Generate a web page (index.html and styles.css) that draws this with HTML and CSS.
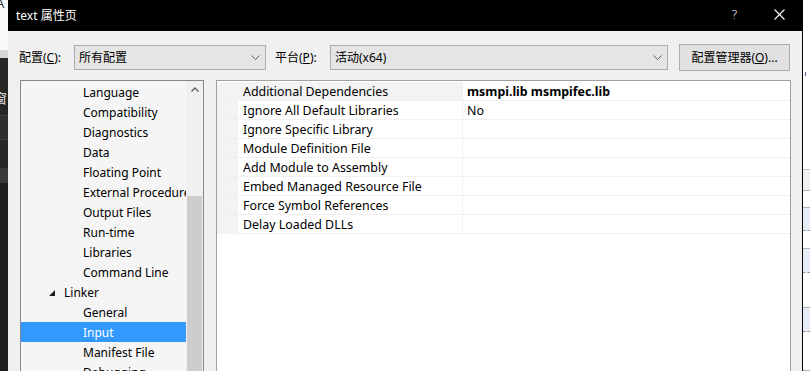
FILE: index.html
```html
<!DOCTYPE html>
<html lang="zh-CN">
<head>
<meta charset="utf-8">
<title>text 属性页</title>
<link rel="stylesheet" href="styles.css">
</head>
<body>
<div class="desk desk-left">
  <div class="dl-white"><span class="dl-a">A</span></div>
  <div class="dl-lgray"></div>
  <div class="dl-dark1"><span class="dl-char">窗</span></div>
  <div class="dl-box"></div>
  <div class="dl-dark2"></div>
  <div class="dl-band"></div>
  <div class="dl-dark3"></div>
</div>

<div class="dialog">
  <div class="titlebar">
    <div class="title">text 属性页</div>
    <div class="tb-btn tb-help">?</div>
    <div class="tb-btn tb-close">
      <svg width="11" height="11" viewBox="0 0 11 11"><path d="M0.5 0.5 L10.5 10.5 M10.5 0.5 L0.5 10.5" stroke="#fff" stroke-width="1.1" fill="none"/></svg>
    </div>
  </div>

  <div class="body">
    <div class="toprow">
      <label class="lbl lbl-cfg">配置(<u>C</u>):</label>
      <div class="combo combo-cfg">
        <span>所有配置</span>
        <svg class="chev" width="9" height="5" viewBox="0 0 9 5"><path d="M0.5 0.5 L4.5 4.5 L8.5 0.5" stroke="#606060" fill="none"/></svg>
      </div>
      <label class="lbl lbl-plat">平台(<u>P</u>):</label>
      <div class="combo combo-plat">
        <span>活动(x64)</span>
        <svg class="chev" width="9" height="5" viewBox="0 0 9 5"><path d="M0.5 0.5 L4.5 4.5 L8.5 0.5" stroke="#606060" fill="none"/></svg>
      </div>
      <button class="btn">配置管理器(<u>O</u>)...</button>
    </div>

    <div class="panels">
      <div class="tree">
        <div class="tree-list">
          <div class="ti child">Language</div>
          <div class="ti child">Compatibility</div>
          <div class="ti child">Diagnostics</div>
          <div class="ti child">Data</div>
          <div class="ti child">Floating Point</div>
          <div class="ti child">External Procedures</div>
          <div class="ti child">Output Files</div>
          <div class="ti child">Run-time</div>
          <div class="ti child">Libraries</div>
          <div class="ti child">Command Line</div>
          <div class="ti parent"><svg class="tri" width="6" height="6" viewBox="0 0 6 6"><path d="M6 0 L6 6 L0 6 Z" fill="#1e1e1e"/></svg>Linker</div>
          <div class="ti child">General</div>
          <div class="ti child sel">Input</div>
          <div class="ti child">Manifest File</div>
          <div class="ti child">Debugging</div>
        </div>
        <div class="vscroll">
          <div class="sc-up"><svg width="8" height="5" viewBox="0 0 8 5"><path d="M0.5 4.5 L4 1 L7.5 4.5" stroke="#606060" stroke-width="1.4" fill="none"/></svg></div>
          <div class="sc-track"></div>
          <div class="sc-thumb"></div>
        </div>
      </div>

      <div class="grid">
        <div class="prow focus"><div class="pm"></div><div class="pn">Additional Dependencies</div><div class="pv bold">msmpi.lib msmpifec.lib</div></div>
        <div class="prow"><div class="pm"></div><div class="pn">Ignore All Default Libraries</div><div class="pv">No</div></div>
        <div class="prow"><div class="pm"></div><div class="pn">Ignore Specific Library</div><div class="pv"></div></div>
        <div class="prow"><div class="pm"></div><div class="pn">Module Definition File</div><div class="pv"></div></div>
        <div class="prow"><div class="pm"></div><div class="pn">Add Module to Assembly</div><div class="pv"></div></div>
        <div class="prow"><div class="pm"></div><div class="pn">Embed Managed Resource File</div><div class="pv"></div></div>
        <div class="prow"><div class="pm"></div><div class="pn">Force Symbol References</div><div class="pv"></div></div>
        <div class="prow"><div class="pm"></div><div class="pn">Delay Loaded DLLs</div><div class="pv"></div></div>
      </div>
    </div>
  </div>
</div>

<div class="desk desk-right">
  <div class="dr-white"><span class="dr-mark"></span></div>
  <div class="dr-head"></div>
  <div class="dr-w dr-h17"></div>
  <div class="dr-blue"></div>
  <div class="dr-w dr-h18"></div>
  <div class="dr-blue"></div>
  <div class="dr-w dr-h36"></div>
  <div class="dr-blue"></div>
  <div class="dr-w dr-h40"></div>
</div>
</body>
</html>
```

FILE: styles.css
```css
* { box-sizing: border-box; }
html, body { margin: 0; padding: 0; }
body {
  width: 810px;
  height: 371px;
  overflow: hidden;
  display: flex;
  background: #1f1f1f;
  font-family: "Noto Sans", "Noto Sans CJK SC", sans-serif;
  font-size: 12px;
  color: #000;
}

/* desktop strips behind the dialog */
.desk { flex: none; overflow: hidden; height: 371px; display: flex; flex-direction: column; }
.desk-left { width: 8px; }
.dl-white { height: 50px; background: #fafafa; }
.dl-a { display: block; margin-left: -4px; margin-top: -4px; font-size: 13px; line-height: 14px; color: #333; }
.dl-lgray { height: 8px; background: #d6d6d6; }
.dl-dark1 { height: 57px; background: #262626; overflow: hidden; }
.dl-char { display: block; margin-top: 33px; margin-left: -6px; font-size: 13px; line-height: 14px; color: #e0e0e0; font-family: "Noto Sans CJK SC", sans-serif; }
.dl-box { height: 25px; background: #2e2e2e; border-top: 1px solid #3e3e3e; border-bottom: 1px solid #3e3e3e; }
.dl-dark2 { height: 28px; background: #262626; }
.dl-band { height: 15px; background: #3a3a3a; }
.dl-dark3 { flex: 1; background: #1f1f1f; }

.desk-right { width: 7px; background: #fff; }
.dr-white { height: 172px; background: #fff; position: relative; }
.dr-mark { position: absolute; left: 2px; top: 72px; width: 1px; height: 4px; background: #5a5a9a; }
.dr-head { height: 22px; background: #f0f0f0; border-top: 1px solid #c8c8c8; border-bottom: 1px solid #b0b0b0; }
.dr-w { background: #fff; border-bottom: 1px solid #b0b0b0; }
.dr-h17 { height: 17px; }
.dr-h18 { height: 18px; }
.dr-h36 { height: 36px; }
.dr-h40 { height: 40px; }
.dr-blue { height: 24px; background: #e6edf7; border-bottom: 1px dashed #9a9a9a; }

/* dialog */
.dialog {
  flex: none;
  width: 795px;
  height: 371px;
  background: #f0f0f0;
  border-right: 1px solid #000;
  display: flex;
  flex-direction: column;
}
.titlebar {
  height: 31px;
  background: #000;
  display: flex;
  align-items: center;
  color: #fff;
}
.title {
  flex: 1;
  padding-left: 8px;
  font-size: 12px;
  line-height: 16px;
}
.tb-btn {
  width: 45px;
  height: 31px;
  display: flex;
  align-items: center;
  justify-content: center;
}
.tb-help { font-size: 13px; font-family: "DejaVu Sans", sans-serif; font-weight: 300; padding-bottom: 2px; }
.tb-close svg { display: block; margin-bottom: 2px; }

.body { padding: 13px 12px 0 11px; }

.toprow {
  display: flex;
  align-items: center;
  height: 27px;
}
.lbl { flex: none; line-height: 16px; }
.lbl-cfg { width: 55px; }
.lbl-plat { width: 55px; margin-left: 9px; }
.combo {
  flex: none;
  height: 25px;
  background: #e5e5e5;
  border: 1px solid #acacac;
  display: flex;
  align-items: center;
  justify-content: space-between;
  padding: 0 5px 0 4px;
  line-height: 16px;
}
.combo-cfg { width: 192px; }
.combo-plat { width: 338px; }
.chev { display: block; }
.btn {
  flex: none;
  margin-left: 11px;
  width: 111px;
  height: 27px;
  background: #e1e1e1;
  border: 1px solid #adadad;
  font: inherit;
  color: #000;
  padding: 0;
  line-height: 16px;
}

.panels {
  display: flex;
  margin-top: 9px;
  height: 300px;
}

/* tree */
.tree {
  flex: none;
  width: 184px;
  margin-left: 1px;
  border: 1px solid #828790;
  background: #f5f5f5;
  display: flex;
  overflow: hidden;
}
.tree-list {
  width: 165px;
  padding-top: 1px;
  overflow: hidden;
}
.ti {
  height: 20px;
  line-height: 21px;
  white-space: nowrap;
  overflow: hidden;
}
.ti.child { padding-left: 62px; }
.ti.parent { padding-left: 28px; display: flex; align-items: center; }
.tri { display: block; margin-right: 9px; margin-top: 1px; }
.ti.sel { background: #3399ff; color: #fff; }

.vscroll {
  width: 17px;
  background: #f0f0f0;
  display: flex;
  flex-direction: column;
  align-items: center;
}
.sc-up {
  height: 17px;
  width: 17px;
  display: flex;
  align-items: center;
  justify-content: center;
}
.sc-up svg { display: block; }
.sc-track { height: 98px; }
.sc-thumb { width: 15px; flex: 1; background: #cdcdcd; }

/* property grid */
.grid {
  flex: none;
  width: 575px;
  margin-left: 12px;
  border: 1px solid #a0a0a0;
  border-bottom: none;
  background: #fff;
  padding-top: 1px;
  font-size: 12.4px;
}
.prow {
  display: flex;
  height: 19px;
  border-bottom: 1px solid #f0f0f0;
  background: #f3f3f3;
}
.pm { width: 21px; flex: none; background: #f3f3f3; }
.pn {
  width: 225px;
  flex: none;
  padding-left: 5px;
  line-height: 19px;
  background: #fff;
  border-right: 1px solid #f0f0f0;
  white-space: nowrap;
}
.prow.focus .pn { background: #f3f3f3; }
.pv {
  flex: 1;
  padding-left: 4px;
  line-height: 19px;
  background: #fff;
  white-space: nowrap;
}
.pv.bold { font-weight: bold; }
u { text-decoration: underline; text-underline-offset: 1px; }
```
